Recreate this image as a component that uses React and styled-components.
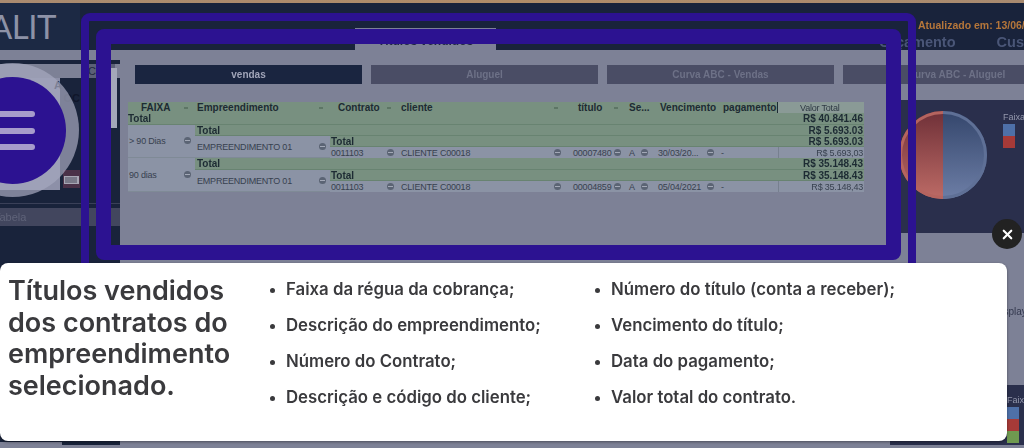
import React from "react";
import styled, { createGlobalStyle } from "styled-components";
import { X } from "lucide-react";

const GlobalStyle = createGlobalStyle`
    html, body {
        margin: 0;
        padding: 0;
        background: #7d8196;
    }
    #root {
        width: 1024px;
        height: 448px;
    }
`;

const topics = [
    ["Faixa da régua da cobrança;", "Descrição do empreendimento;", "Número do Contrato;", "Descrição e código do cliente;"],
    ["Número do título (conta a receber);", "Vencimento do título;", "Data do pagamento;", "Valor total do contrato."],
];

const headers = [
    { label: "FAIXA", pad: 13, arrow: true },
    { label: "Empreendimento", pad: 2, arrow: true },
    { label: "Contrato", pad: 8, arrow: true },
    { label: "cliente", pad: 3, arrow: true },
    { label: "título", pad: 13, arrow: true },
    { label: "Se...", pad: 4 },
    { label: "Vencimento", pad: 8 },
    { label: "pagamento", pad: 5, caret: true },
];

const groups = [
    {
        faixa: "> 90 Dias",
        total: "R$ 5.693.03",
        contrato: "0011103",
        cliente: "CLIENTE C00018",
        titulo: "00007480",
        vencimento: "30/03/20...",
        valor: "R$ 5.693,03",
    },
    {
        faixa: "90 dias",
        total: "R$ 35.148.43",
        contrato: "0011103",
        cliente: "CLIENTE C00018",
        titulo: "00004859",
        vencimento: "05/04/2021",
        valor: "R$ 35.148,43",
    },
];

function App() {
    return (
        <Page>
            <GlobalStyle />
            <Dashboard>
                <TopStrip />
                <Header>
                    <Logo>
                        <LogoText>ALIT</LogoText>
                    </Logo>
                    <ActiveTab>Títulos vendidos</ActiveTab>
                    <HeaderSide>
                        <Updated>Atualizado em: 13/06/2023</Updated>
                        <NavLinks>
                            <NavLink>Orçamento</NavLink>
                            <NavLink>Custos</NavLink>
                        </NavLinks>
                    </HeaderSide>
                </Header>
                <Body>
                    <LeftPanel>
                        <FilterBar>
                            <FilterButton>C</FilterButton>
                        </FilterBar>
                        <Scroll />
                        <LogoArea>
                            <LogoAreaText $shift={18}>A</LogoAreaText>
                            <LogoAreaText>OC</LogoAreaText>
                            <Calendar viewBox="0 0 17 18">
                                <rect width="17" height="18" fill="#4a3148" />
                                <rect x="1" y="6" width="15" height="8" fill="#a7a6b4" />
                                <path d="M3 7v6M5 7v6M7 7v6M9 7v6M11 7v6M13 7v6" stroke="#4a4a5c" strokeWidth="1" />
                            </Calendar>
                        </LogoArea>
                        <TabelaBar>Tabela</TabelaBar>
                    </LeftPanel>
                    <Content>
                        <Tabs>
                            <Tab $active>vendas</Tab>
                            <Tab>Aluguel</Tab>
                            <Tab>Curva ABC - Vendas</Tab>
                            <Tab>Curva ABC - Aluguel</Tab>
                        </Tabs>
                        <ContentRow>
                            <TableArea>
                                <Table>
                                    {headers.map((h) => (
                                        <HeadCell key={h.label} $pad={h.pad} $caret={h.caret}>
                                            {h.label}
                                            {h.arrow && <Arrow />}
                                        </HeadCell>
                                    ))}
                                    <ValueHead>Valor Total</ValueHead>

                                    <TotalCell $from={1} $pad={0}>Total</TotalCell>
                                    <TotalValue>R$ 40.841.46</TotalValue>

                                    {groups.map((g) => (
                                        <React.Fragment key={g.faixa}>
                                            <SideCell $rows={3}>
                                                {g.faixa}
                                                <Dot />
                                            </SideCell>
                                            <TotalCell $from={2} $pad={2}>Total</TotalCell>
                                            <TotalValue>{g.total}</TotalValue>
                                            <SideCell $rows={2} $pad={2}>
                                                EMPREENDIMENTO 01
                                                <Dot />
                                            </SideCell>
                                            <TotalCell $from={3} $pad={1}>Total</TotalCell>
                                            <TotalValue>{g.total}</TotalValue>
                                            <DataCell $pad={1}>
                                                {g.contrato}
                                                <Dot />
                                            </DataCell>
                                            <DataCell $pad={3}>
                                                {g.cliente}
                                                <Dot />
                                            </DataCell>
                                            <DataCell $pad={8}>
                                                {g.titulo}
                                                <Dot />
                                            </DataCell>
                                            <DataCell $pad={4}>
                                                A
                                                <Dot />
                                            </DataCell>
                                            <DataCell $pad={6}>
                                                {g.vencimento}
                                                <Dot />
                                            </DataCell>
                                            <DataCell $pad={3}>-</DataCell>
                                            <DataValue>{g.valor}</DataValue>
                                        </React.Fragment>
                                    ))}
                                </Table>
                            </TableArea>
                            <RightColumn>
                                <ChartPanel>
                                    <Pie viewBox="0 0 88 88">
                                        <defs>
                                            <linearGradient id="redHalf" x1="0" y1="0" x2="0" y2="1">
                                                <stop offset="0" stopColor="#6f3038" />
                                                <stop offset="1" stopColor="#bd6b66" />
                                            </linearGradient>
                                            <linearGradient id="blueHalf" x1="0" y1="0" x2="0" y2="1">
                                                <stop offset="0" stopColor="#34466c" />
                                                <stop offset="1" stopColor="#6d7ea6" />
                                            </linearGradient>
                                        </defs>
                                        <path d="M44 0A44 44 0 0 0 44 88Z" fill="url(#redHalf)" />
                                        <path d="M44 0A44 44 0 0 1 44 88Z" fill="url(#blueHalf)" />
                                        <path d="M44 1.5A42.5 42.5 0 0 0 44 86.5" fill="none" stroke="#b5645f" strokeWidth="3" />
                                        <path d="M44 1.5A42.5 42.5 0 0 1 44 86.5" fill="none" stroke="#5f7096" strokeWidth="3" />
                                    </Pie>
                                    <Legend>
                                        <LegendTitle>Faixa</LegendTitle>
                                        <Swatch $color="#4e70a8" />
                                        <Swatch $color="#a63a38" />
                                    </Legend>
                                </ChartPanel>
                                <MiddleBlock>
                                    <DisplayText>Display</DisplayText>
                                </MiddleBlock>
                                <BottomPanel>
                                    <LowerLegend>
                                        <LegendTitle>Faixa</LegendTitle>
                                        <Swatch $color="#4e70a8" />
                                        <Swatch $color="#a63a38" />
                                        <Swatch $color="#6f9a50" />
                                    </LowerLegend>
                                </BottomPanel>
                            </RightColumn>
                        </ContentRow>
                    </Content>
                </Body>
            </Dashboard>

            <OuterFrame />
            <InnerFrame />
            <MenuHalo />
            <MenuButton>
                <MenuLine />
                <MenuLine />
                <MenuLine />
            </MenuButton>
            <CloseButton>
                <X size={15} strokeWidth={3.5} color="#ffffff" />
            </CloseButton>
            <Modal>
                <ModalTitle>Títulos vendidos dos contratos do empreendimento selecionado.</ModalTitle>
                {topics.map((column) => (
                    <TopicList key={column[0]}>
                        {column.map((topic) => (
                            <Topic key={topic}>{topic}</Topic>
                        ))}
                    </TopicList>
                ))}
            </Modal>
        </Page>
    );
}

export default App;

const Page = styled.div`
    position: relative;
    width: 1024px;
    height: 448px;
    overflow: hidden;
    font-family: "Liberation Sans", Arial, sans-serif;
`;

const Dashboard = styled.div`
    display: flex;
    flex-direction: column;
    width: 1024px;
    height: 448px;
    background: #7d8196;
    filter: blur(0.5px);
`;

const TopStrip = styled.div`
    height: 3px;
    background: linear-gradient(90deg, #a98a70, #b08c68 50%, #a88a70);
`;

const Header = styled.div`
    display: flex;
    height: 47px;
    background: #19233b;
`;

const Logo = styled.div`
    width: 355px;
    overflow: hidden;
`;

const LogoText = styled.div`
    width: 80px;
    height: 47px;
    padding-top: 5px;
    box-sizing: border-box;
    background: #1c2944;
    font-family: Lato, sans-serif;
    font-weight: 400;
    font-size: 33px;
    line-height: 36px;
    letter-spacing: -0.5px;
    text-indent: -10px;
    color: #8d92a7;
`;

const ActiveTab = styled.div`
    width: 141px;
    height: 22px;
    margin-top: 25px;
    background: #7d8196;
    font-size: 12px;
    font-weight: bold;
    line-height: 26px;
    text-align: center;
    color: #1f2740;
`;

const HeaderSide = styled.div`
    display: flex;
    flex-direction: column;
    margin-left: auto;
    width: 145px;
    white-space: nowrap;
`;

const Updated = styled.div`
    padding: 16px 0 0 39px;
    font-size: 10.5px;
    font-weight: bold;
    line-height: 13px;
    color: #b5763a;
`;

const NavLinks = styled.div`
    display: flex;
    gap: 41px;
    margin-top: 2px;
`;

const NavLink = styled.span`
    font-size: 14.5px;
    font-weight: bold;
    line-height: 16px;
    color: #4a5677;
`;

const Body = styled.div`
    flex: 1;
    display: flex;
    min-height: 0;
`;

const LeftPanel = styled.div`
    position: relative;
    display: flex;
    flex-direction: column;
    width: 120px;
    height: 385px;
    margin-top: 10px;
    padding-top: 4px;
    box-sizing: border-box;
    background:
        linear-gradient(#19233b, #19233b) no-repeat 0 0 / 100% 382px,
        linear-gradient(#19233b, #19233b) no-repeat 62px 0 / 58px 100%;
`;

const FilterBar = styled.div`
    display: flex;
    justify-content: flex-end;
    height: 14px;
    padding-right: 5px;
    background: #7d8196;
`;

const FilterButton = styled.div`
    width: 27px;
    font-size: 11px;
    line-height: 14px;
    background: #5b6076;
    color: #23293f;
`;

const Scroll = styled.div`
    position: absolute;
    top: 8px;
    right: 3px;
    width: 7px;
    height: 60px;
    background: #a4a8ba;
`;

const LogoArea = styled.div`
    display: flex;
    flex-direction: column;
    align-items: flex-end;
    height: 126px;
    padding: 3px 40px 0 0;
    box-sizing: border-box;
    font-size: 11px;
    border-bottom: 1px solid #3a4058;
    background: linear-gradient(#8d90a8, #8d90a8) no-repeat 0 0 / 60px 112px;
`;

const LogoAreaText = styled.span`
    margin-right: ${(props) => props.$shift || 0}px;
    margin-bottom: 4px;
    line-height: 9px;
    font-weight: bold;
    color: #10162a;
`;

const Calendar = styled.svg`
    width: 17px;
    height: 18px;
    margin-top: 63px;
    flex: none;
`;

const TabelaBar = styled.div`
    height: 18px;
    margin-top: 4px;
    background: #42465e;
    font-size: 11px;
    line-height: 18px;
    text-indent: -6px;
    color: #5f6379;
`;

const Content = styled.div`
    flex: 1;
    display: flex;
    flex-direction: column;
    min-width: 0;
`;

const Tabs = styled.div`
    display: flex;
    gap: 9px;
    padding: 15px 0 0 15px;
    overflow: hidden;
`;

const Tab = styled.div`
    flex: none;
    width: 227px;
    height: 19px;
    font-size: 10px;
    font-weight: bold;
    line-height: 19px;
    text-align: center;
    background: ${(props) => (props.$active ? "#1a2540" : "#4a4d65")};
    color: ${(props) => (props.$active ? "#a0a4b8" : "#6d7187")};
`;

const ContentRow = styled.div`
    flex: 1;
    display: flex;
    min-height: 0;
    padding-top: 16px;
`;

const TableArea = styled.div`
    width: 768px;
    padding: 2px 0 0 8px;
    box-sizing: border-box;
`;

const Table = styled.div`
    display: grid;
    grid-template-columns: 67px 135px 68px 167px 60px 27px 66px 60px 86px;
    grid-template-rows: 11px 12px 11px 11px 11px 12px 11px 11px;
    width: 736px;
    font-size: 9px;
    line-height: 12px;
    letter-spacing: -0.2px;
    white-space: nowrap;
    color: #38414f;
`;

const HeadCell = styled.div`
    position: relative;
    padding-left: ${(props) => props.$pad}px;
    background: #789080;
    font-size: 10px;
    letter-spacing: 0;
    font-weight: bold;
    color: #1d2b33;
    border-right: ${(props) => (props.$caret ? "1px solid #1d2b33" : "none")};
`;

const Arrow = styled.span`
    position: absolute;
    right: 7px;
    top: 5px;
    width: 4px;
    height: 2px;
    background: #5d7565;
`;

const ValueHead = styled.div`
    padding-left: 22px;
    background: #8a9a96;
    color: #2f3a44;
`;

const TotalCell = styled.div`
    grid-column: ${(props) => props.$from} / 9;
    padding-left: ${(props) => props.$pad}px;
    background: #789080;
    border-bottom: 1px solid #688371;
    box-sizing: border-box;
    font-size: 10px;
    letter-spacing: 0;
    line-height: 11px;
    font-weight: bold;
    color: #1d2b33;
`;

const TotalValue = styled.div`
    padding-right: 1px;
    background: #789080;
    border-bottom: 1px solid #688371;
    box-sizing: border-box;
    font-size: 10px;
    letter-spacing: 0;
    line-height: 11px;
    font-weight: bold;
    text-align: right;
    color: #1d2b33;
`;

const SideCell = styled.div`
    grid-row: span ${(props) => props.$rows};
    position: relative;
    display: flex;
    align-items: center;
    padding-left: ${(props) => props.$pad || 1}px;
    background: #8b93a5;
    border-bottom: 1px solid #7f8a96;
    box-sizing: border-box;
`;

const Dot = styled.span`
    position: absolute;
    right: 4px;
    top: 50%;
    width: 7px;
    height: 7px;
    margin-top: -4px;
    border-radius: 50%;
    background: #5b6474;

    &::after {
        content: "";
        position: absolute;
        left: 1px;
        top: 3px;
        width: 5px;
        height: 1px;
        background: #a2a8b6;
    }
`;

const DataCell = styled.div`
    position: relative;
    padding-left: ${(props) => props.$pad}px;
    background: #8b93a5;
`;

const DataValue = styled.div`
    padding-right: 1px;
    background: #8b93a5;
    border-left: 1px solid #77808f;
    text-align: right;
`;

const RightColumn = styled.div`
    flex: 1;
    display: flex;
    flex-direction: column;
    margin-left: 2px;
    min-width: 0;
`;

const ChartPanel = styled.div`
    display: flex;
    height: 133px;
    padding: 11px 0 0 9px;
    box-sizing: border-box;
    background: #2a2f4c;
`;

const Pie = styled.svg`
    width: 88px;
    height: 88px;
    flex: none;
`;

const Legend = styled.div`
    display: flex;
    flex-direction: column;
    margin: -1px 0 0 16px;
`;

const LegendTitle = styled.span`
    font-size: 9px;
    line-height: 14px;
    color: #9498ac;
`;

const Swatch = styled.span`
    width: 12px;
    height: 12px;
    background: ${(props) => props.$color};
`;

const MiddleBlock = styled.div`
    height: 152px;
    padding: 68px 0 0 116px;
    box-sizing: border-box;
    overflow: hidden;
`;

const DisplayText = styled.span`
    font-size: 10px;
    color: #33384e;
    margin-left: -12px;
`;

const BottomPanel = styled.div`
    height: 60px;
    background: #2a2f4c;
`;

const LowerLegend = styled.div`
    display: flex;
    flex-direction: column;
    padding: 8px 0 0 117px;
`;

const OuterFrame = styled.div`
    position: absolute;
    left: 81px;
    top: 13px;
    width: 835px;
    height: 290px;
    box-sizing: border-box;
    border: 8px solid #2c1291;
    border-radius: 9px;
`;

const InnerFrame = styled.div`
    position: absolute;
    left: 96px;
    top: 29px;
    width: 805px;
    height: 231px;
    box-sizing: border-box;
    border: 15px solid #2c1291;
    border-radius: 8px;
`;

const MenuHalo = styled.div`
    position: absolute;
    left: -54px;
    top: 63px;
    width: 133px;
    height: 134px;
    border-radius: 50%;
    background: rgba(165, 168, 190, 0.72);
`;

const MenuButton = styled.div`
    position: absolute;
    left: -41px;
    top: 77px;
    width: 107px;
    height: 107px;
    display: flex;
    flex-direction: column;
    align-items: center;
    justify-content: center;
    gap: 10.5px;
    border-radius: 50%;
    background: #2c1291;
`;

const MenuLine = styled.span`
    width: 45px;
    height: 6px;
    border-radius: 3px;
    background: #a79ccb;
`;

const CloseButton = styled.div`
    position: absolute;
    left: 992px;
    top: 219px;
    width: 30px;
    height: 30px;
    display: flex;
    align-items: center;
    justify-content: center;
    border-radius: 50%;
    background: #222222;
`;

const Modal = styled.div`
    position: absolute;
    left: 0;
    top: 263px;
    width: 1007px;
    height: 178px;
    display: grid;
    grid-template-columns: 264px 325px 1fr;
    padding: 12px 0 0 8px;
    box-sizing: border-box;
    border-radius: 8px;
    background: #ffffff;
    box-shadow: 0 1px 3px rgba(0, 0, 0, 0.4);
    font-family: Inter, "Liberation Sans", sans-serif;
    color: #3a3a3d;
`;

const ModalTitle = styled.div`
    width: 240px;
    font-size: 27px;
    font-weight: 600;
    line-height: 31.5px;
`;

const TopicList = styled.ul`
    margin: 0;
    padding: 0;
    list-style: none;
`;

const Topic = styled.li`
    position: relative;
    height: 36px;
    padding-left: 14px;
    font-size: 16.8px;
    font-weight: 600;
    line-height: 29px;
    white-space: nowrap;

    &::before {
        content: "";
        position: absolute;
        left: -2px;
        top: 13px;
        width: 5px;
        height: 5px;
        border-radius: 50%;
        background: #3a3a3d;
    }
`;
